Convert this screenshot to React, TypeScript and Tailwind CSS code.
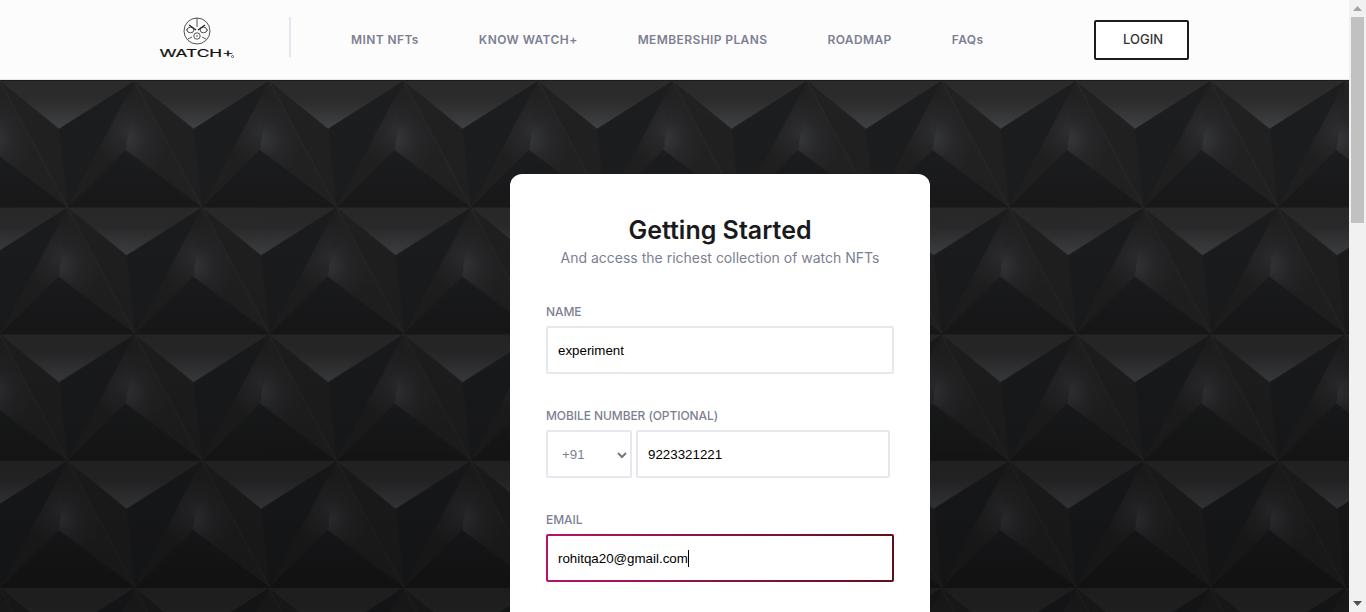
import React from "react";

const inter = "font-['Inter',sans-serif]";

function Pattern() {
  return (
    <svg className="absolute inset-0 h-full w-full" aria-hidden="true">
      <defs>
        <linearGradient id="faceA" x1="0" y1="0" x2="0" y2="1">
          <stop offset="0" stopColor="#2a2a2b" />
          <stop offset="0.4" stopColor="#2c2c2d" />
          <stop offset="1" stopColor="#424347" />
        </linearGradient>
        <radialGradient id="faceC" gradientUnits="userSpaceOnUse" cx="-5" cy="50" r="38">
          <stop offset="0" stopColor="#2f3033" />
          <stop offset="0.4" stopColor="#28282a" />
          <stop offset="1" stopColor="#202021" />
        </radialGradient>
        <radialGradient id="faceH" gradientUnits="userSpaceOnUse" cx="-8" cy="58" r="42">
          <stop offset="0" stopColor="#37383c" />
          <stop offset="0.5" stopColor="#28282a" />
          <stop offset="1" stopColor="#222223" />
        </radialGradient>
        <linearGradient id="faceD" x1="0" y1="0" x2="0" y2="1">
          <stop offset="0" stopColor="#1c1d1f" />
          <stop offset="1" stopColor="#19191a" />
        </linearGradient>
        <linearGradient id="fade" x1="0" y1="0" x2="0" y2="1">
          <stop offset="0" stopColor="#000000" stopOpacity="0" />
          <stop offset="0.25" stopColor="#000000" stopOpacity="0.06" />
          <stop offset="0.5" stopColor="#000000" stopOpacity="0.14" />
          <stop offset="0.75" stopColor="#000000" stopOpacity="0.23" />
          <stop offset="1" stopColor="#000000" stopOpacity="0.32" />
        </linearGradient>
        <g id="cell">
          <polygon points="0,0 134.5,0 59,48" fill="url(#faceA)" />
          <polygon points="134.5,0 59,48 67.5,126.5" fill="#1c1d1f" />
          <polygon points="0,0 59,48 67.5,126.5" fill="#212122" />
          <polygon points="0,0 -9,69 67.5,126.5" fill="url(#faceH)" />
          <polygon points="0,0 -9,69 -67,126.5" fill="url(#faceC)" />
          <polygon points="-67,126.5 -9,69 67.5,126.5" fill="url(#faceD)" />
          <line x1="0" y1="0" x2="67.5" y2="126.5" stroke="#2c2c2e" strokeWidth="0.8" />
        </g>
        <pattern id="tile" patternUnits="userSpaceOnUse" x="0" y="1" width="134.5" height="253.5">
          <use href="#cell" />
          <use href="#cell" x="134.5" />
          <use href="#cell" x="-67" y="126.5" />
          <use href="#cell" x="67.5" y="126.5" />
          <use href="#cell" x="202" y="126.5" />
        </pattern>
      </defs>
      <rect width="100%" height="100%" fill="url(#tile)" />
      <rect width="100%" height="100%" fill="url(#fade)" />
    </svg>
  );
}

function Logo() {
  return (
    <div className="relative flex h-[60px] w-[74px] flex-col items-center self-start pt-[17px]">
      <svg width="28" height="28" viewBox="0 0 28 28" fill="none" stroke="#2a2a2a" strokeWidth="0.8" className="shrink-0">
        <circle cx="14" cy="14" r="13" />
        <ellipse cx="7.5" cy="13" rx="3.4" ry="2.8" />
        <ellipse cx="20.5" cy="13" rx="3.4" ry="2.8" />
        <circle cx="14" cy="19" r="3.2" />
        <path d="M14 1v9M3 13h1M24 13h1M14 18v2M5 22l4-2M23 22l-4-2" />
        <path d="M6 8l7 5M22 8l-7 5" strokeWidth="1.5" />
      </svg>
      <span className="mt-[2px] origin-center scale-x-[1.57] whitespace-nowrap text-[11px] leading-[12px] font-normal text-[#111] [-webkit-text-stroke:0.2px_#111]">
        WATCH+
      </span>
      <span className="absolute top-[55px] left-[71px] size-[3px] rounded-full border-[0.5px] border-[#555]" />
    </div>
  );
}

function Field({ label, children }: { label: string; children: React.ReactNode }) {
  return (
    <div className="mb-[34px]">
      <div className="mb-[6px] text-[12px] leading-[16px] font-medium tracking-[-0.08px] text-[#7c7f93]">{label}</div>
      {children}
    </div>
  );
}

const box =
  "flex h-[48px] items-center rounded-[2px] border-2 border-[#e7e7ee] bg-white px-[10px] pt-[1px] font-['Liberation_Sans',sans-serif] text-[13.33px]";

export default function App() {
  const nav = ["MINT NFTs", "KNOW WATCH+", "MEMBERSHIP PLANS", "ROADMAP", "FAQs"];
  return (
    <div className={`flex h-[612px] w-[1366px] overflow-hidden bg-white ${inter}`}>
      <div className="flex w-[1349px] flex-col">
        <header className="flex h-[80px] shrink-0 items-start border-b border-[#e8e8e8] bg-[#fcfcfc] pl-[160px]">
          <Logo />
          <div className="mt-[17px] ml-[55px] h-[40px] w-[2px] bg-[#e6e6ee]" />
          <nav className="mt-[32px] ml-[60px] flex w-[744px] gap-[60px] text-[12px] leading-[16px] font-semibold tracking-[0.4px] text-[#7c7f93]">
            {nav.map((n) => (
              <span key={n}>{n}</span>
            ))}
          </nav>
          <button className="mt-[20px] -ml-[1px] flex h-[40px] w-[95px] items-center justify-center rounded-[2px] border-2 border-[#1c1c1c] bg-white pl-[3px] text-[13px] font-medium text-[#333]">
            LOGIN
          </button>
        </header>
        <main className="relative flex-1 overflow-hidden bg-[#1c1c1d] pt-[94px] pl-[510px]">
          <Pattern />
          <section className="relative h-[700px] w-[420px] rounded-[12px] bg-white px-[36px] pt-[40px]">
            <h1 className="text-center text-[25px] leading-[32px] font-semibold text-[#1a1a1e]">
              Getting Started
            </h1>
            <p className="mt-[2px] mb-[36px] text-center text-[14px] leading-[20px] text-[#7c7f93]">
              And access the richest collection of watch NFTs
            </p>
            <Field label="NAME">
              <div className={`${box} text-black`}>experiment</div>
            </Field>
            <Field label="MOBILE NUMBER (OPTIONAL)">
              <div className="flex gap-[4px]">
                <div className={`${box} w-[86px] justify-between pr-[2px] pl-[14px] text-[#7c7f93]`}>
                  <span>+91</span>
                  <svg width="12" height="12" viewBox="0 0 12 12" fill="none" stroke="#777" strokeWidth="2">
                    <path d="M2 4l4 4 4-4" />
                  </svg>
                </div>
                <div className={`${box} w-[254px] text-black`}>9223321221</div>
              </div>
            </Field>
            <Field label="EMAIL">
              <div className="rounded-[2px] bg-linear-to-r from-[#b5126c] to-[#5e0f1c] p-[2px]">
                <div className="flex h-[44px] items-center bg-white px-[10px] pt-[1px] font-['Liberation_Sans',sans-serif] text-[13.33px] text-black">
                  <span>rohitqa20@gmail.com</span>
                  <span className="h-[17px] w-[1px] bg-black" />
                </div>
              </div>
            </Field>
          </section>
        </main>
      </div>
      <aside className="flex h-[612px] w-[17px] flex-col items-center bg-[#f1f1f1]">
        <div className="flex h-[17px] w-full items-center justify-center">
          <svg width="9" height="5" viewBox="0 0 9 5"><path d="M4.5 0L9 5H0z" fill="#a3a3a3" /></svg>
        </div>
        <div className="h-[206px] w-[13px] bg-[#c1c1c1]" />
        <div className="flex-1" />
        <div className="flex h-[17px] w-full items-center justify-center">
          <svg width="9" height="5" viewBox="0 0 9 5"><path d="M0 0h9L4.5 5z" fill="#505050" /></svg>
        </div>
      </aside>
    </div>
  );
}
